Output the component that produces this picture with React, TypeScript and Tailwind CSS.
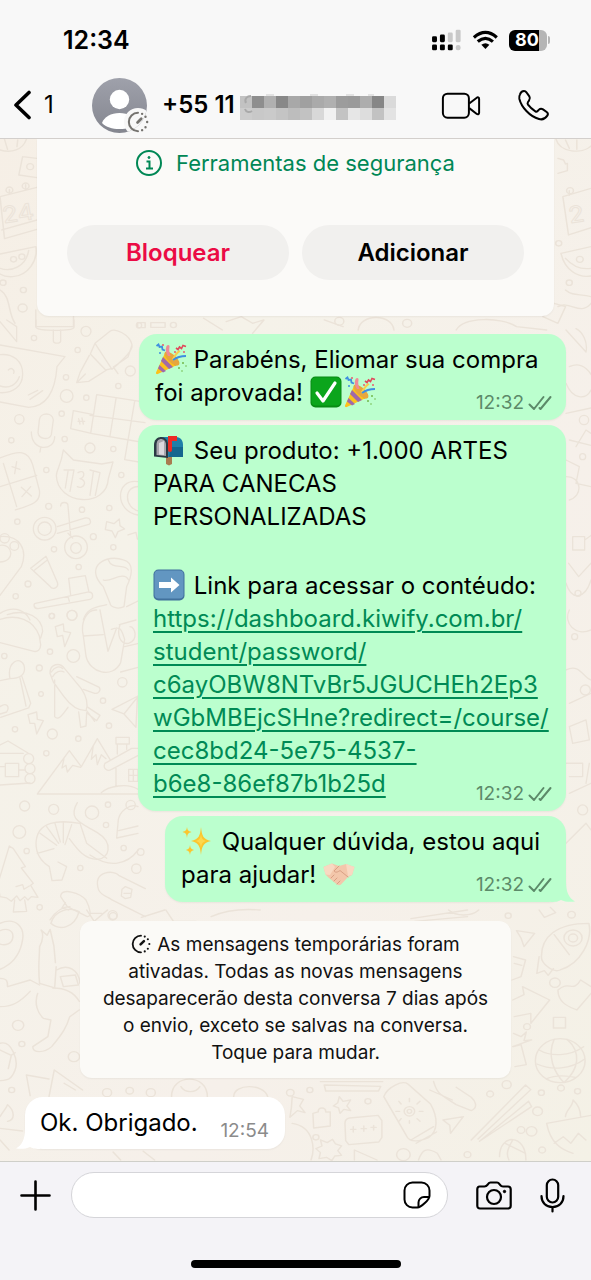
import { FC, ReactNode } from "react";

const DoodleWallpaper: FC = () => (
  <svg
    aria-hidden="true"
    className="absolute inset-0 h-full w-full"
    viewBox="0 139 591 1022"
    preserveAspectRatio="xMidYMid slice"
    fill="none"
    stroke="#ebe3d9"
    strokeWidth="4"
    strokeLinecap="round"
    strokeLinejoin="round"
  >
    <defs>
      <linearGradient id="paper" x1="0" y1="0" x2="1" y2="1">
        <stop offset="0" stopColor="#f6efe6" />
        <stop offset="0.3" stopColor="#f5f2e9" />
        <stop offset="0.65" stopColor="#f6f0ea" />
        <stop offset="1" stopColor="#f4f1e6" />
      </linearGradient>
    </defs>
    <rect y="139" width="591" height="1022" fill="url(#paper)" stroke="none" />

    {/* top strips, both sides of the security card */}
    <g transform="translate(0 130) scale(.377 .3333)">
      <path d="M0 60c30 10 60 0 70-32M20 58l-8-30M45 50l2-20M60 80l38 5M60 80l-10 55 48 8" />
      <circle cx="80" cy="110" r="9" />
      <path d="M0 200l98-28M0 200l12 126 86-28M5 300l93-30M25 192v-14M68 178v-14" />
      <circle cx="25" cy="180" r="9" />
      <circle cx="68" cy="168" r="9" />
      <text x="10" y="280" fontSize="68" fontFamily="Inter, sans-serif" strokeWidth="3" transform="rotate(-9 10 280)">24</text>
      <path d="M0 372l95-22c6 40-20 88-62 90-14 1-26-3-33-8M0 415c30 12 70-6 76-54" />
      <circle cx="36" cy="388" r="8" />
      <circle cx="58" cy="380" r="8" />
      <circle cx="8" cy="458" r="8" />
      <circle cx="62" cy="480" r="8" />
      <circle cx="60" cy="534" r="12" />
      <path d="M0 480c30 20 20 70 40 100M95 540v50h100v-30" />
      <path d="M365 578h20v15h-20zM400 578h38v14h-38zM540 565l50 35M600 575l40-15 30 20 30-10-30 40M860 570l50 20M950 600c5-50 90-50 95 0M1210 600c20-40 120-40 160-10l80 10M1440 560l30-40 30 10-20 50z" />
      <circle cx="460" cy="585" r="8" />
      <circle cx="900" cy="574" r="12" />
      <circle cx="1080" cy="580" r="12" />
      <path d="M1475 28c10 40 70 45 93 20M1500 30l10 25M1530 30v28M1480 85l15 5 5 12 5-2v22l-25 8" />
      <path d="M1568 175l-75 25 15 115 60-22M1488 370l80-20M1488 370c10 50 45 75 80 68M1500 385c20 25 40 35 68 30M1510 196v-14" />
      <circle cx="1512" cy="182" r="9" />
      <circle cx="1538" cy="388" r="9" />
      <circle cx="1510" cy="458" r="8" />
      <circle cx="1482" cy="340" r="8" />
      <text x="1512" y="280" fontSize="68" fontFamily="Inter, sans-serif" strokeWidth="3" transform="rotate(-9 1512 280)">2</text>
      <path d="M1480 530c30-20 60 30 88-10M1500 480c20 20 40 10 68 20" />
    </g>

    {/* pen, microphone, cat, toothbrush */}
    <g transform="translate(0 320) scale(.3333)">
      <path d="M0 5l50 60V20L20 0M108 0v22c0 12 112 12 114 0V0M160 30v32c0 10 22 10 22 0V30" />
      <path d="M0 75l195 35-24 30c-5 70-30 120-85 122L0 246M85 225l28-14M90 238l38-26" />
      <path d="M0 104c40-4 68 20 68 58s-30 58-68 56M25 150c10-10 20 0 16 10M0 198c30 10 50-6 58-28" />
      <path d="M285 70l45-36c15-12 60 10 66 40 3 15-15 35-60 74zM285 70l-14 32 46 48 18-4M268 106l-28 52-10 30 36-4 54-34M230 188l26-26M396 75l-12 36-44 30 14 20" />
      <path d="M290 224l130 20M290 224l-18 116 150 26M220 272l60 12M220 272l-8 54 62 14M348 236l-18 112M404 244l-30 175 61 10M270 286l165 22" />
      <path d="M236 296l4 16M246 294l4 18M234 304h20" />
      <path d="M118 300c2-24 40-24 42 0l-6 44c-6 18-38 14-40-6zM94 336c0 60 70 58 70 14M122 384l-2 12" />
      <path d="M190 390l30 30 85 12 34-6-14 50c-4 90-154 80-156-10 2-20 14-30 21-76z" />
      <path d="M192 450h30l-12 64M204 454l-8 50M234 458c20-12 24 14 6 18 26 6 10 34-8 24M270 450l30 8-14 68M280 456l-10 70" />
      <path d="M0 414c60-24 84-24 98 20l20 76c6 36-20 44-72 60M0 500l110-34M10 430l40 130M36 440l24 8M50 425l-6 36M64 502l30 26M92 500l-26 30" />
      <path d="M182 558c0-14 22-14 22 0l8 90M172 620l84-26c18-2 20 18 8 20l-92 26M204 640l14 14" />
      <circle cx="134" cy="626" r="34" />
      <circle cx="134" cy="626" r="20" />
      <circle cx="228" cy="682" r="34" />
      <circle cx="228" cy="684" r="16" />
      <path d="M320 605l22 6 16-14 2 20 14 10-20 8-8 18-10-20-20-4zM92 745l46-36 34 78c6 16-14 24-22 12zM104 750l38-30M106 850l160-34c16 0 14 20 4 22l-156 28c-14 0-14-16-8-16zM206 775l50-8 10 45M206 775l6 50M204 830l4 14" />
      <path d="M0 650c60-6 84 40 64 90L0 826M0 676c40-6 46 50 0 50M330 850l-20-50c-60-60 10-100 60-80 40 10 20 60 10 80l-8 60c-20 10-40 0-42-10zM310 780c20 10 60-30 76 0M325 720c10 30 50 10 60 30M250 900c10-40 50-40 70-46M380 860l40-20v60M0 880c50-30 80 0 90 20" />
      <path d="M414 485c-70-10-70 90 0 100M420 500c-50-6-50 66 0 74M384 645l24-8 4 20 20 0" />
      {[
        [258, 34, 15], [102, 54, 8], [233, 90, 8], [417, 16, 8], [198, 172, 8], [200, 228, 19], [259, 233, 8], [391, 153, 15],
        [355, 198, 8], [185, 281, 8], [58, 298, 14], [34, 361, 8], [194, 357, 8], [270, 384, 15], [340, 387, 8], [139, 450, 8],
        [364, 465, 8], [146, 559, 9], [246, 569, 8], [328, 564, 8], [52, 605, 8], [280, 650, 9], [14, 655, 14], [43, 678, 13],
        [162, 688, 8], [340, 682, 8], [236, 741, 8], [84, 792, 9], [47, 829, 8], [156, 888, 8], [216, 886, 15],
      ].map(([cx, cy, r]) => (
        <circle key={`${cx}-${cy}`} cx={cx} cy={cy} r={r} />
      ))}
    </g>

    {/* taco, rocket, mountains, shrimp */}
    <g transform="translate(0 610) scale(.3333)">
      <path d="M0 28c50-16 100 0 118 50l4 26c0 16-10 22-20 20L0 98M22 14c60-20 104 10 106 50l-6 20M166 50l24-8 2 22 20 4-18 42-6-34-16 4z" />
      <path d="M250 78c-10-40 10-80 40-78M250 78l8 60c10 50 80 70 104 20l12-70c-10-30-10-40-40-30M250 78l60-4M300 0l24 124 26-70M358 44l50-14M360 44c-10 30 0 60 26 56 30-10 20-50 4-50M374 110l42-10M362 186l52-14" />
      <path d="M0 212l30-6c-10-50 30-70 42-40 8 30-16 40-42 40M66 200l26 80-6 14-84 28M60 204l18 84M0 290c20-14 30 0 20 16L0 312" />
      <path d="M150 190c0-30 30-34 44-14l50 60c20 30 20 50 14 66-30 0-50-20-66-42l-32-44zM154 186c10-16 26-20 34-10M158 200c8-16 24-20 34-14M230 200l68 32c6 10-4 20-14 18l-34-12M164 210v110c10 12 20 0 40-28M236 306l6 46 16-4 2-40 30 24 10-16-36-24M260 302l24 32" />
      <path d="M336 298l78-40M336 298l36 14 36 40 4-90M372 312l40-50M84 314l26-8 2 22 18 4-20 40-6-32-14 0z" />
      <path d="M0 405l24-12 60 36M0 430h70M16 460h40v40H16zM0 525l90-6M0 470h16M56 480h20" />
      <circle cx="86" cy="446" r="15" />
      <circle cx="90" cy="476" r="15" />
      <circle cx="90" cy="506" r="15" />
      <path d="M112 552l96-130 36 48 48-84 38 62M112 552h302M192 446l-6 28 12-8 4 20 16-20 24 6M280 406l-6 42 14-14 4 30 12-30 14 12M348 382h40v20h-40zM352 402v30M380 402v16M315 460l80-45 20 0M315 460c-8 16 8 26 20 18l80-42M348 475v54M386 478h28v36h-28zM400 478v36M386 496h28M304 548c20-20 80-30 110-10" />
      <path d="M232 578c-30 50 10 60 60 90 50 30 36 80 0 80-40 0-60-30-84-62M240 640c-60-10-130-10-132 60 0 40 24 60 40 70l8 42 30-2 14-40-26-14M240 640l20 60 60 45M120 670l50 36M140 650l36 50M165 640l16 56M190 638l0 60M215 644l-20 60M112 730l50-14" />
      <path d="M270 735c60 40 110 30 145-15M354 640c0-40 40-60 60-50M354 640l-4 44 64-14M356 662l58-14" />
      <path d="M0 860l-6-40 34-112 12 8 36 54-12 4 36 46-8 6 22 36-20-2-10 10-10-10-14 12-10-14-16 16-14-10zM44 870l-4 36 40-2-6-34M48 830l20-6 4 14 16-10" />
      <path d="M182 860c0-30 60-10 76 10 10 20 20 50 4 50l-60-30zM150 930c20-30 40-40 60-40M206 900l-20-6 10-16M296 840c-20-60 50-60 60-44l80 40M296 840c10 20 30 20 40 30l100 50M366 838l10-8 20 8-4 24-16 4-12-8zM372 850h20" />
      {[
        [155, 18, 8], [216, 16, 15], [150, 125, 8], [13, 138, 8], [220, 138, 19], [118, 174, 9], [367, 217, 14], [123, 252, 7],
        [309, 272, 8], [45, 358, 8], [157, 372, 15], [327, 347, 8], [235, 386, 8], [139, 430, 8], [74, 588, 15], [161, 598, 15],
        [276, 608, 20], [324, 584, 8], [392, 585, 14], [58, 666, 19], [318, 645, 8], [80, 723, 8], [371, 714, 8], [422, 726, 10],
        [241, 774, 8], [409, 776, 14], [119, 892, 8], [338, 916, 14],
      ].map(([cx, cy, r]) => (
        <circle key={`${cx}-${cy}`} cx={cx} cy={cy} r={r} />
      ))}
    </g>

    {/* right edge beside the sent messages */}
    <g transform="translate(566 330) scale(.3333)">
      <path d="M0 0l60 66c6-30-10-60-30-70M10 110c40-20 70 20 75 50M0 160c20 50 60 50 75 20M0 250l75-16M10 330l65 16M30 350l30-50 15 10M0 390l40 20-10 50 45 10M0 440c50 0 50 60 10 70" />
      <path d="M0 760c20 60 60 40 75-10M10 840c-20 40 20 80 65 60M0 1020c40-20 50 20 75 30M10 1120l65-30M10 1190l50-20 10 60-50 10zM0 1300h50v40H10M70 1300l-10 60M10 1390l65-30M0 1540l60-60 15 20" />
      <path d="M20 620h36v40H20zM56 630l20-14M8 700l30 40 37-40" />
      <circle cx="54" cy="270" r="14" />
      <circle cx="50" cy="380" r="9" />
      <circle cx="36" cy="790" r="9" />
      <circle cx="26" cy="920" r="9" />
      <circle cx="58" cy="1080" r="15" />
      <circle cx="50" cy="1440" r="15" />
    </g>

    {/* lower band */}
    <g transform="translate(0 910) scale(.377 .3333)">
      <path d="M0 40c40-20 70 10 58 60-6 30-20 60-58 78M0 62c20-10 36 0 34 20s-20 26-34 20" />
      <path d="M135 40c10-40 50-50 75-35M135 40c20 20 60 20 75-35M105 110c10-20 10-40 4-50l16 16 8-18 10 50 4 50M105 110c0 30-5 60 0 110l40 14 4-64M0 205c20 0 20 10 20 25l60-20 25 15M0 290c30 0 50-10 80-46M100 250c-10 30 0 60 15 75l20 5-8 50-40 30c0 20 30 20 50 0 30-40 40-60 48-90l25-20M140 234c40 0 60 20 70 40M150 180c30-20 60 0 62 40M160 200l40-5 8 30-40 5z" />
      <path d="M0 400c30-10 50 50 40 80s-20 30-40 32M0 420l30 16-8 40M30 436l10-8M70 495l10 62M70 495l60 12M130 560l14-80 75 60M170 520l30 20" />
      <path d="M230 0l20 34 35-34M240 10l30 0M375 22l62-22M440 0l20 34h60M560 20c60-30 120-20 130-20M1090 26l150-26M1100 34l140-14M1190 0c20 20 60 20 80 0M1430 0l14 22 30-14-14-16" />
      <path d="M1370 62l48 8-28 40-8-26zM1436 140c0-60 40-100 126-100 10 50-20 120-76 140-20 10-50-20-50-40zM1470 74l40 60M1430 140l-6 50 20-8 10 14 14-20" />
      <circle cx="1520" cy="84" r="24" />
      <circle cx="1520" cy="84" r="12" />
      <path d="M1362 140l32 10-12 50-24 10M1364 160l20 6M1360 270l30-16-4-24 72 40-50 70v-30l-44 10M1480 240c30-30 40 10 60-30l28 20M1480 240c0 40 30 50 50 60l38-50M1468 322h32v32h-32zM1362 370l20 10 14-14-6 26 20-2-50 20M1362 410l20-6 14 60-30 6" />
      <circle cx="1486" cy="452" r="66" />
      <path d="M1430 420c30 20 80 20 118-10M1424 462c40 20 90 16 126-14M1450 506c20-10 50-10 76-4M1470 388c-20 50 0 100 26 130M1504 388c40 40 30 90-6 128" />
      <path d="M455 560c0-70 95-70 95 0M620 560c0-40 80-40 90 0M480 530c10 20 40 20 50 0M850 515h165M860 525l150 4-6 14-140 0zM775 560l30 8-10 20 14 20-20-6-20 20 4-30zM900 560l10 14 20-4-10 18 10 14-18-4-10 12-4-16-14-6 12-10z" />
      <path d="M1018 560c10-30 50-50 64-38l60 60c20 40 20 80-4 100-20 10-50 20-60-5zM1090 690l60-40M1104 700l54-34M1086 575v-10M1086 640v-8M1050 604h10M1112 604h10M1064 582l-6-8M1106 582l8-8M1064 626l-6 8M1106 626l8 8" />
      <circle cx="1086" cy="604" r="14" />
      <circle cx="1086" cy="604" r="6" />
      <path d="M1150 514c10 40 20 40 60 70l40 18c20-10 10-30 0-40l-40-30M1140 540l60 30M1250 690l144-165 14 14-140 148M1272 694l130-120 8 16-138 104M1175 630l54-10-34 50-2-24zM1325 740c0-70 70-70 70 10M1340 700l54 30M1360 690c-10 20-20 40-10 60" />
      <path d="M1450 640l118-24M1450 640c10 60 40 80 70 90M1500 620c0-20 20-30 20-50 20 20 20 40 20 50M1470 700l24-20 20 20 20-30 20 20M830 610l14-4c0-16 20-16 20 0l12 0v42l-44 6zM915 640c0-8 4-14 12-16l76-8 10 16v50l-8 14-80 8-8-12zM850 690l18 8 14-10 8 14 16 6-10 14 10 14-18 2-8 14-14-10-20 4 4-18-12-12 16-8z" />
      <path d="M930 658h14M937 650v16M958 656h14M965 648v16M984 652h14M991 646v14M775 640c60 10 60 80 50 110M1000 750l-60-30v30M1110 750c10-30 20-40 50-20l10 20M0 620c10-20 14-20 20-36 20 20 20 46 0 50M0 655l60 8M0 690l24 30M300 726l20 24M380 724l30 26" />
      {[
        [350, 88, 11], [300, 18, 10], [48, 346, 15], [58, 402, 8], [196, 440, 15], [284, 548, 12], [344, 542, 10], [400, 548, 12],
        [31, 540, 8], [770, 548, 10], [822, 540, 8], [976, 574, 8], [1348, 17, 8], [1516, 14, 10], [1472, 218, 14], [1398, 350, 9],
        [1436, 548, 8], [1488, 534, 9], [1300, 552, 9], [1344, 524, 12], [1426, 604, 13], [1382, 660, 10], [1410, 664, 14], [1532, 544, 8],
        [838, 682, 8], [1070, 734, 18], [1240, 734, 9], [1438, 720, 9],
      ].map(([cx, cy, r]) => (
        <circle key={`${cx}-${cy}`} cx={cx} cy={cy} r={r} />
      ))}
    </g>
  </svg>
);

const PartyEmoji: FC = () => (
  <svg role="img" aria-label="🎉" viewBox="0 0 32 32" className="inline-block h-8 w-8 align-[-7px]">
    <path d="M10 10L1 29.500c-.3 1.300.7 2 1.800 1.600L22 22z" fill="#fcc21b" />
    <path d="M8 14l10 10-4 2-8-8zM4.500 22l6.500 6-3 1.500-5-4z" fill="#a06aa8" />
    <path d="M10 10l2-1 12 10-1 3-3 .8z" fill="#e99a23" />
    <ellipse cx="17" cy="15.500" rx="4" ry="9.500" transform="rotate(-48 17 15.500)" fill="#e7a63d" />
    <path d="M13 13c-2-3-3-6-1.500-10 1.500-2 3.500-1 3 1-.7 3 0 6 1 9z" fill="#ef8a97" />
    <path d="M17 16c2-4 4-7 7-9l1.500 1.500C22 11 20 14 19 18z" fill="#f7cf4d" />
    <path d="M18 17c4-3 8-4 13-4M1.500 3l2-1.500 1 2.500 2.500-.5.500 3 2.500 1" fill="none" stroke="#3e8ee0" strokeWidth="1.800" />
    <path d="M21 5l2 1.500 1.500-2.500 2 1.500 1.500-3 3 1" fill="none" stroke="#e0485b" strokeWidth="1.600" />
    <g fill="#e85c6c">
      <circle cx="8" cy="2" r="1" />
      <circle cx="29" cy="9" r="1" />
      <circle cx="20" cy="9" r="1" />
    </g>
    <g fill="#73b84b">
      <circle cx="28" cy="20" r="1" />
      <circle cx="24" cy="25" r="1" />
      <circle cx="31" cy="23" r=".8" />
      <circle cx="27" cy="28" r=".8" />
    </g>
    <circle cx="5" cy="10" r="1" fill="#3e8ee0" />
  </svg>
);

const CheckEmoji: FC = () => (
  <svg role="img" aria-label="✅" viewBox="0 0 32 32" className="mr-0.5 inline-block h-8 w-8 align-[-7px]">
    <rect x=".5" y=".5" width="31" height="31" rx="5" fill="#088a14" />
    <rect x="1.500" y="1.500" width="29" height="28" rx="4" fill="#0ba51c" />
    <path d="M7 17l6 8L25 7" fill="none" stroke="#fff" strokeWidth="3.200" strokeLinecap="round" strokeLinejoin="round" />
  </svg>
);

const MailboxEmoji: FC = () => (
  <svg role="img" aria-label="📬" viewBox="0 0 32 32" className="mr-0.5 inline-block h-8 w-8 align-[-7px]">
    <path d="M13 22h6v8l-3 1.500-3-1.500z" fill="#a97c50" />
    <path d="M7 3h16c5 0 7 4 7 8v12H11z" fill="#1f7fa8" />
    <path d="M18 13h12v10H16z" fill="#15668e" />
    <path d="M1 11c0-5 3-8 7-8s7 3 7 8v13l-14-1.500z" fill="#2b3a44" />
    <path d="M3.500 11c0-4 2-6 4.500-6s5 2 5 6v11l-9.500-1z" fill="#a9a5ad" />
    <path d="M6 9l5-2v14l-5-.6z" fill="#dcd8de" />
    <path d="M15 2h9v5h-5v9a2 2 0 0 1-4 0z" fill="#ee2b24" />
  </svg>
);

const ArrowEmoji: FC = () => (
  <svg role="img" aria-label="➡️" viewBox="0 0 32 32" className="mr-0.5 inline-block h-8 w-8 align-[-7px]">
    <rect x=".5" y=".5" width="31" height="31" rx="5" fill="#41719c" />
    <rect x="1.500" y="1.500" width="29" height="28" rx="4" fill="#6296c1" />
    <path d="M6 13h12V8.500l8.500 7.500-8.500 7.500V19H6z" fill="#fff" />
  </svg>
);

const SparklesEmoji: FC = () => (
  <svg role="img" aria-label="✨" viewBox="0 0 32 32" className="mr-0.5 inline-block h-8 w-8 align-[-7px]">
    <g fill="#fbc62f">
      <path d="M20 2c1 9 2 12 10 14-8 2-9 5-10 14-1-9-2-12-10-14 8-2 9-5 10-14z" />
      <path d="M6 2c.5 3 1 4 4.500 5C7 8 6.500 9 6 13 5.500 9 5 8 1.500 7 5 6 5.500 5 6 2z" />
      <path d="M9 20c.5 3 1 4 4 5-3 1-3.500 2-4 5-.5-3-1-4-4-5 3-1 3.500-2 4-5z" />
    </g>
    <path d="M20 9c.6 4.500 1.500 6 5 7-3.500 1-4.400 2.500-5 7-.6-4.500-1.500-6-5-7 3.500-1 4.400-2.500 5-7z" fill="#fdd84e" />
  </svg>
);

const HandshakeEmoji: FC = () => (
  <svg role="img" aria-label="🤝🏻" viewBox="0 0 32 32" className="inline-block h-8 w-8 align-[-7px]">
    <path d="M.5 9L9 5.500l7 2.500 7-2L31.500 9 29 17l-4 2-7 7.500c-1 1-3 1-4 0L6 20l-3.500-3.500z" fill="#f3c7ab" />
    <path d="M9 5.500L.5 9l2 7.500L7 17l5-8zM23 6l8.500 3L29 17l-4 1z" fill="#f8d9c2" />
    <path d="M16 8l-5 5c1.500 2 4 1 6-.5L25 19M8 20l3-3M11 23l3-3M14 26l3-3" fill="none" stroke="#d9a084" strokeWidth="1" strokeLinecap="round" />
  </svg>
);

const TimerIcon: FC<{ className: string }> = ({ className }) => (
  <svg aria-hidden="true" viewBox="0 0 24 24" className={className} fill="none" stroke="currentColor" strokeWidth="2.200" strokeLinecap="round">
    <path d="M12 2a10 10 0 0 0 0 20" />
    <path d="M16.500 3.100v.01M20.200 6.300v.01M22 12v.01M20.200 17.700v.01M16.500 20.900v.01" strokeWidth="2.600" />
    <path d="M11.500 12.500L15.500 8.500" strokeWidth="3" />
  </svg>
);

const DoubleCheck: FC = () => (
  <svg aria-hidden="true" viewBox="0 0 24 16" className="h-4 w-6" fill="none" stroke="currentColor" strokeWidth="2" strokeLinecap="round" strokeLinejoin="round">
    <path d="M1.500 9.500L6 14 15.500 2M11.500 13l1 1L22.500 2" />
  </svg>
);

// 12px blocks that hide the rest of the number
const mosaic = [
  ["#c2c2c2", "#8e8e8e", "#b0b0b0", "#888888", "#a8a8a8", "#a0a0a0", "#aaaaaa", "#b0b0b0", "#9c9c9c", "#9a9a9a", "#adadad", "#868686", "#dadada"],
  ["#cccccc", "#c8c8c8", "#cacaca", "#c4c4c4", "#bdbdbd", "#c2c2c2", "#d8d8d8", "#f1f1f1", "#c3c3c3", "#e6e6e6", "#dddddd", "#c2c2c2", "#e3e3e3"],
];

const HiddenNumber: FC = () => (
  <svg aria-hidden="true" viewBox="0 0 156 36" className="mb-1.5 h-9 w-[156px] shrink-0">
    {mosaic.map((row, y) =>
      row.map((fill, x) => (
        <rect key={`${x}-${y}`} x={x * 12} y={12 + y * 12} width="12.200" height="12" fill={fill} />
      ))
    )}
    <path d="M6 19c-2-4 1-7 5-7M5 25c1 3 4 4 7 2" fill="none" stroke="#a9a9a9" strokeWidth="2" />
    <path d="M26 11h8M70 11h8M106 11h8M128 11h6" stroke="#e2e2e2" strokeWidth="2" />
  </svg>
);

const StatusBar: FC = () => (
  <div className="flex h-[76px] items-center justify-between pt-1 pl-[63px] pr-[41px]">
    <span className="text-[25px] leading-8 font-semibold">12:34</span>
    <div className="flex items-center">
      <svg aria-label="Sinal" role="img" viewBox="422 85 92 67" className="mr-2.5 h-[22px] w-[31px]">
        <g fill="#000">
          <rect x="424" y="107" width="15" height="18" rx="4" />
          <rect x="448" y="102" width="15" height="23" rx="4" />
          <rect x="424" y="132" width="15" height="18" rx="4" />
          <rect x="448" y="132" width="15" height="18" rx="4" />
          <rect x="472" y="132" width="15" height="18" rx="4" />
        </g>
        <g fill="#c9c9c9">
          <rect x="472" y="96" width="15" height="29" rx="4" />
          <rect x="496" y="87" width="15" height="38" rx="4" />
          <rect x="496" y="134" width="15" height="16" rx="7" />
        </g>
      </svg>
      <svg aria-label="Wi-Fi" role="img" viewBox="544 86 80 62" className="mr-2.5 h-[20px] w-[27px]" fill="none" stroke="#000" strokeWidth="10">
        <path d="M548 109Q584 78 619 109M560 122Q584 102 607 122" />
        <path d="M571 132Q584 122 596 132L584 145Z" fill="#000" stroke="none" />
      </svg>
      <div className="flex h-[21px] w-[38px] items-center justify-center rounded-[6px] bg-linear-to-r from-black from-80% to-[#b5b5b5] to-80%">
        <span className="pr-0.5 text-[18px] leading-5 font-bold text-white">80</span>
      </div>
      <span className="ml-px h-2 w-0.5 rounded-r bg-[#b5b5b5]" />
    </div>
  </div>
);

const ChatHeader: FC = () => (
  <header className="relative border-b border-[#d3cfcc] bg-[#f8f8f8] pb-1">
    <StatusBar />
    <div className="flex h-[58px] items-center pl-3 pr-[41px]">
      <button aria-label="Voltar" className="flex items-center">
        <svg viewBox="0 0 20 30" className="h-[30px] w-5" fill="none" stroke="#000" strokeWidth="3.600" strokeLinecap="round" strokeLinejoin="round">
          <path d="M17 2.500L4 15l13 12.500" />
        </svg>
        <span className="ml-3 w-[18px] text-left text-[24px] leading-8">1</span>
      </button>
      <div className="relative ml-[30px] shrink-0">
        <svg aria-label="Foto do perfil" role="img" viewBox="0 0 55 55" className="h-[55px] w-[55px]">
          <defs>
            <linearGradient id="avatar" x1="0" y1="0" x2="0" y2="1">
              <stop offset="0" stopColor="#9fa1ab" />
              <stop offset="1" stopColor="#84868f" />
            </linearGradient>
            <clipPath id="avatarClip">
              <circle cx="27.500" cy="27.500" r="27.500" />
            </clipPath>
          </defs>
          <g clipPath="url(#avatarClip)">
            <rect width="55" height="55" fill="url(#avatar)" />
            <circle cx="27.500" cy="21.500" r="9.700" fill="#fff" />
            <path d="M10 45c2-6 9-10 17.500-10S43 39 45 45c-4 4-10 6-17.500 6S14 49 10 45z" fill="#fff" />
            <circle cx="46" cy="44" r="14" fill="#f8f8f8" />
          </g>
        </svg>
        <TimerIcon className="absolute -right-[2px] bottom-0 h-[22px] w-[22px] text-[#75736f]" />
      </div>
      <h1 className="ml-[15px] flex items-center gap-[5px] text-[24px] leading-8 font-semibold whitespace-nowrap">
        +55 11
        <HiddenNumber />
      </h1>
      <div className="ml-auto flex items-center gap-9">
        <button aria-label="Chamada de vídeo">
          <svg viewBox="450 268 120 82" className="h-[27px] w-10" fill="none" stroke="#000" strokeWidth="6" strokeLinejoin="round">
            <rect x="455" y="273" width="79" height="73" rx="14" />
            <path d="M535 303L557 286C561 283 565 284 565 289V331C565 336 561 337 557 334L535 317" />
          </svg>
        </button>
        <button aria-label="Ligar">
          <svg viewBox="677 261 99 99" className="h-[33px] w-[33px]" fill="none" stroke="#000" strokeWidth="6" strokeLinejoin="round">
            <path d="M686 277C688 271 693 267 698 267C702 267 704 269 706 272L714 283C717 288 716 292 713 296L710 300C708 303 708 305 710 308C716 316 724 323 732 328C735 330 737 329 739 327L743 323C746 320 750 319 755 322L766 330C770 333 771 337 768 341C762 350 753 354 743 351C715 343 690 315 684 290C683 285 684 281 686 277Z" />
          </svg>
        </button>
      </div>
    </div>
  </header>
);

const SecurityCard: FC = () => (
  <section className="mx-[37px] rounded-b-xl bg-[#fbfaf8] px-[30px] pt-2 pb-9 shadow-xs">
    <a href="#seguranca" className="flex items-center justify-center gap-[14px] text-[22px] leading-8 text-[#008755]">
      <svg aria-hidden="true" viewBox="0 0 26 26" className="h-[26px] w-[26px]" fill="none" stroke="currentColor" strokeWidth="2">
        <circle cx="13" cy="13" r="12" />
        <path d="M10.500 11.500H13.500V18.500M10 18.500h7" />
        <circle cx="13" cy="7.500" r="1" fill="currentColor" strokeWidth="1" />
      </svg>
      Ferramentas de segurança
    </a>
    <div className="mt-[46px] flex gap-[13px]">
      <button className="h-[55px] flex-1 rounded-full bg-[#f1f0ee] text-[24px] font-semibold text-[#eb0b45]">Bloquear</button>
      <button className="h-[55px] flex-1 rounded-full bg-[#f1f0ee] text-[24px] font-semibold">Adicionar</button>
    </div>
  </section>
);

interface ISentMessageProps {
  className: string;
  children: ReactNode;
  tail?: boolean;
}

const SentMessage: FC<ISentMessageProps> = ({ className, children, tail }) => (
  <article className={`relative ml-auto mr-[25px] rounded-[18px] bg-[#bbffce] pt-[9px] pb-[5px] text-[24px] leading-[33px] whitespace-nowrap shadow-xs ${className}`}>
    {tail && (
      <svg aria-hidden="true" viewBox="0 0 24 24" className="absolute -right-[9px] bottom-0 h-6 w-6" fill="#bbffce">
        <path d="M0 24C6 24 8 23 10 22C14 24 19 24 24 23.500C18 20 15 14 15 4L0 4Z" />
      </svg>
    )}
    {children}
    <div className="relative -mt-[18px] flex items-center justify-end gap-1 pr-3.5 text-[19px] leading-6 text-[#5c8a69]">
      <time>12:32</time>
      <DoubleCheck />
    </div>
  </article>
);

const Composer: FC = () => (
  <footer className="relative border-t border-[#cfcfc9] bg-[#f4f3f7] pt-2.5 pb-3">
    <div className="flex items-center pl-5 pr-[26px]">
      <button aria-label="Anexar">
        <svg viewBox="0 0 31 31" className="h-[31px] w-[31px]" stroke="#000" strokeWidth="2.600" strokeLinecap="round">
          <path d="M15.500 1.500v28M1.500 15.500h28" />
        </svg>
      </button>
      <div className="ml-5 flex h-[46px] min-w-0 flex-1 items-center rounded-full border border-[#d5d5d9] bg-white pl-5 pr-4">
        <input type="text" aria-label="Mensagem" className="min-w-0 flex-1 bg-transparent text-[24px] outline-none" />
        <button aria-label="Figurinhas">
          <svg viewBox="0 0 28 28" className="h-7 w-7" fill="none" stroke="#000" strokeWidth="2" strokeLinejoin="round">
            <path d="M26.500 15V9.500a8 8 0 0 0-8-8h-9a8 8 0 0 0-8 8v9a8 8 0 0 0 8 8H14.500C18 26.500 26.500 18.500 26.500 15Z" />
            <path d="M15.500 26.300V21.500A5.500 5.500 0 0 1 21 16H26.300" />
          </svg>
        </button>
      </div>
      <button aria-label="Câmera" className="ml-7">
        <svg viewBox="0 0 36 29" className="h-[29px] w-9" fill="none" stroke="#000" strokeWidth="2.200" strokeLinejoin="round">
          <path d="M3.500 5.500H8.500C9.700 5.500 10.500 5.200 11.200 4.200L12.200 2.800C12.800 1.900 13.500 1.500 14.500 1.500H21C22 1.500 22.700 1.900 23.300 2.800L24.300 4.200C25 5.200 25.800 5.500 27 5.500H32C33.700 5.500 34.700 6.500 34.700 8.200V24.800C34.700 26.500 33.700 27.500 32 27.500H4C2.300 27.500 1.300 26.500 1.300 24.800V8.200C1.300 6.500 2.300 5.500 3.500 5.500Z" />
          <circle cx="18" cy="16" r="7" />
          <circle cx="28.500" cy="10.500" r="1.200" fill="#000" strokeWidth="1" />
        </svg>
      </button>
      <button aria-label="Gravar áudio" className="ml-7">
        <svg viewBox="0 0 25 35" className="h-[35px] w-[25px]" fill="none" stroke="#000" strokeWidth="2.200" strokeLinecap="round">
          <rect x="6.800" y="1.500" width="11.400" height="23" rx="5.700" />
          <path d="M1.500 18C1.500 24.500 6 29 12.500 29S23.500 24.500 23.500 18M12.500 29V33.500" />
        </svg>
      </button>
    </div>
    <div className="mx-auto mt-[42px] h-2 w-[210px] rounded-full bg-black" />
  </footer>
);

export default function App() {
  return (
    <div className="flex min-h-screen flex-col bg-[#f5f1e9] font-['Inter','Liberation_Sans',sans-serif] text-black">
      <ChatHeader />
      <main className="relative flex-1 overflow-hidden">
        <DoodleWallpaper />
        <div className="relative flex flex-col pb-[11px]">
          <SecurityCard />

          <SentMessage className="mt-[18px] w-[427px] pl-4">
            <p>
              <PartyEmoji /> Parabéns, Eliomar sua compra
              <br />
              foi aprovada! <CheckEmoji />
              <PartyEmoji />
            </p>
          </SentMessage>

          <SentMessage className="mt-[5px] w-[428px] pl-[15px]">
            <p>
              <MailboxEmoji /> Seu produto: +1.000 ARTES
              <br />
              PARA CANECAS
              <br />
              PERSONALIZADAS
            </p>
            <p className="mt-9">
              <ArrowEmoji /> Link para acessar o contéudo:
              <br />
              <a
                href="https://dashboard.kiwify.com.br/student/password/c6ayOBW8NTvBr5JGUCHEh2Ep3wGbMBEjcSHne?redirect=/course/cec8bd24-5e75-4537-b6e8-86ef87b1b25d"
                className="text-[#008a55] underline decoration-2 underline-offset-4"
              >
                https://dashboard.kiwify.com.br/
                <br />
                student/password/
                <br />
                c6ayOBW8NTvBr5JGUCHEh2Ep3
                <br />
                wGbMBEjcSHne?redirect=/course/
                <br />
                cec8bd24-5e75-4537-
                <br />
                b6e8-86ef87b1b25d
              </a>
            </p>
          </SentMessage>

          <SentMessage className="mt-[5px] w-[401px] pl-4" tail>
            <p className="relative">
              <SparklesEmoji /> Qualquer dúvida, estou aqui
              <br />
              para ajudar! <HandshakeEmoji />
            </p>
          </SentMessage>

          <button className="mx-auto mt-[19px] w-[431px] rounded-xl bg-[#fbfaf7] pt-2.5 pb-3 text-center text-[19px] leading-[27px] whitespace-nowrap text-[#111] shadow-xs">
            <TimerIcon className="mr-1.5 inline-block h-5 w-5 align-[-3px]" />
            As mensagens temporárias foram
            <br />
            ativadas. Todas as novas mensagens
            <br />
            desaparecerão desta conversa 7 dias após
            <br />
            o envio, exceto se salvas na conversa.
            <br />
            Toque para mudar.
          </button>

          <article className="relative mt-[19px] ml-[25px] flex h-[52px] w-[260px] items-center justify-between rounded-[18px] bg-white pr-4 pl-[15px] shadow-xs">
            <svg aria-hidden="true" viewBox="0 0 24 24" className="absolute bottom-0 -left-[9px] h-6 w-6" fill="#fff">
              <path d="M24 24C18 24 16 23 14 22C10 24 5 24 0 23.500C6 20 9 14 9 4L24 4Z" />
            </svg>
            <p className="relative pb-0.5 text-[24px] leading-[33px]">Ok. Obrigado.</p>
            <time className="relative self-end pb-1.5 text-[19px] leading-6 text-[#8b8b8b]">12:54</time>
          </article>
        </div>
      </main>
      <Composer />
    </div>
  );
}
